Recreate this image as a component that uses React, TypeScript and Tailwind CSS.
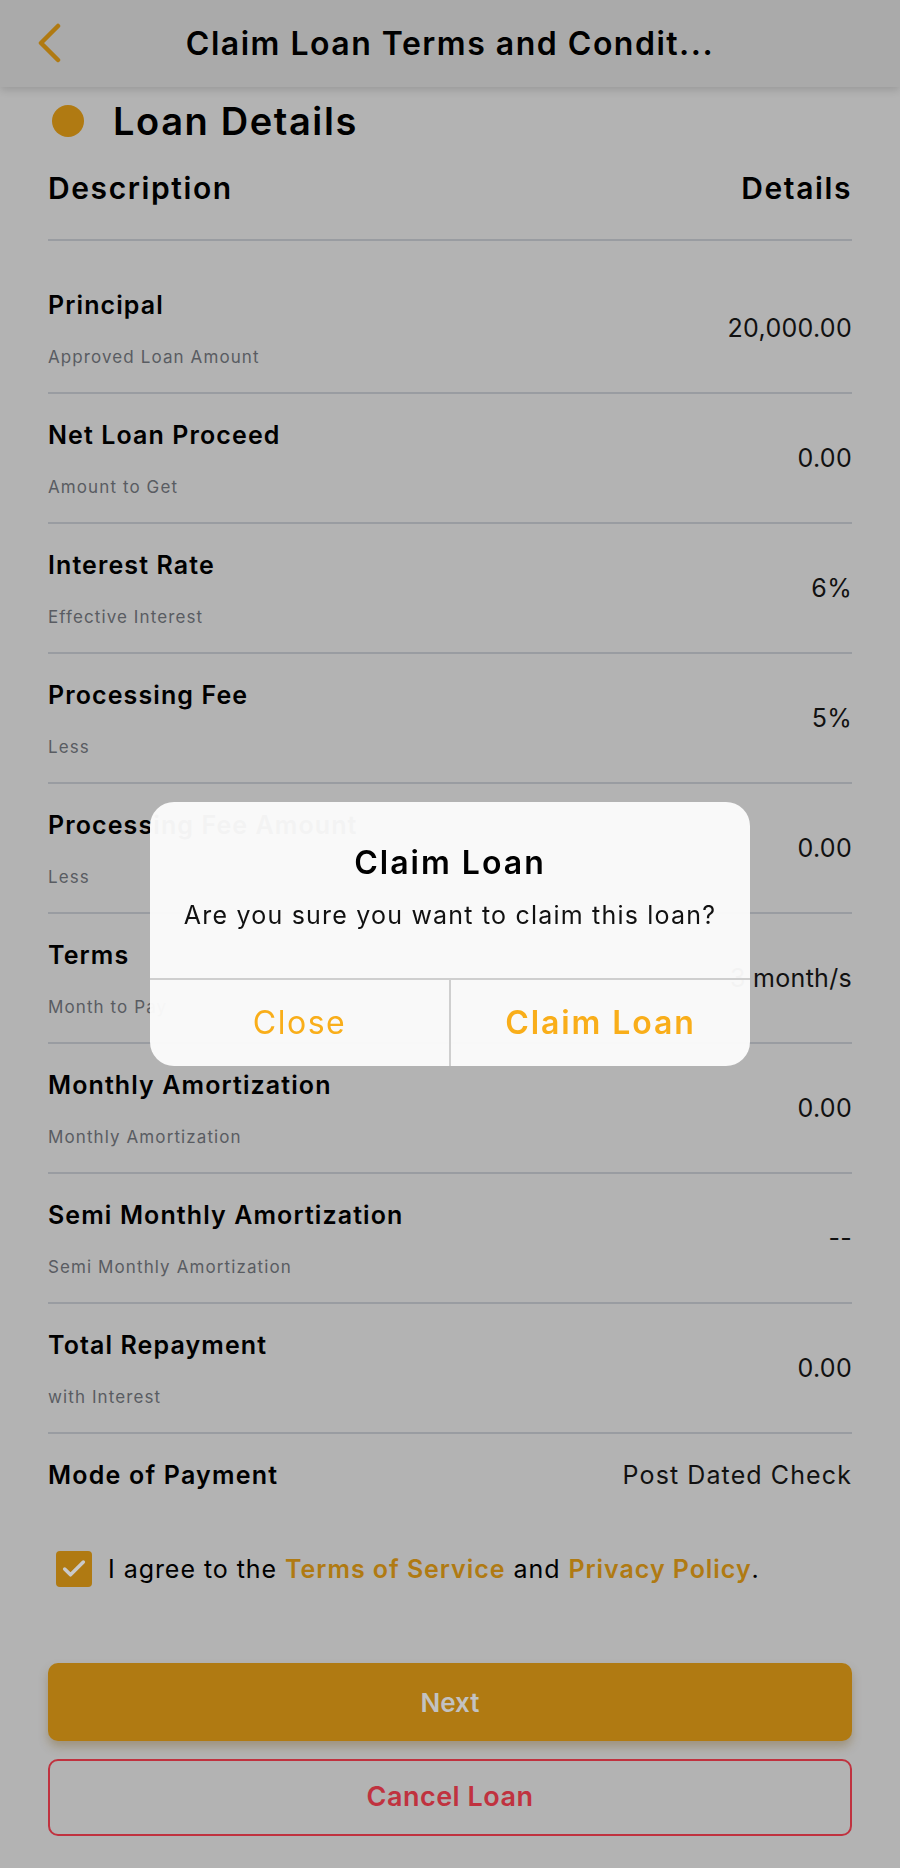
import { Check } from 'lucide-react';

interface DetailRow {
  title: string;
  subtitle: string;
  value: string;
}

const rows: DetailRow[] = [
  { title: 'Principal', subtitle: 'Approved Loan Amount', value: '20,000.00' },
  { title: 'Net Loan Proceed', subtitle: 'Amount to Get', value: '0.00' },
  { title: 'Interest Rate', subtitle: 'Effective Interest', value: '6%' },
  { title: 'Processing Fee', subtitle: 'Less', value: '5%' },
  { title: 'Processing Fee Amount', subtitle: 'Less', value: '0.00' },
  { title: 'Terms', subtitle: 'Month to Pay', value: '3 month/s' },
  { title: 'Monthly Amortization', subtitle: 'Monthly Amortization', value: '0.00' },
  { title: 'Semi Monthly Amortization', subtitle: 'Semi Monthly Amortization', value: '--' },
  { title: 'Total Repayment', subtitle: 'with Interest', value: '0.00' },
];

export default function App() {
  return (
    <div
      className="relative min-h-[1868px] w-full bg-[#b3b3b3] text-black"
      style={{ fontFamily: 'Inter, "Noto Sans", sans-serif' }}
    >
      {/* Header */}
      <div className="relative z-10 grid h-[87px] grid-cols-[1fr_auto_1fr] items-center bg-[#aaaaaa] shadow-[0_3px_8px_rgba(0,0,0,0.14)]">
        <div className="pl-[36px]">
          <svg width="28" height="42" viewBox="0 0 28 42" fill="none">
            <polyline
              points="22,3 5,20 22,37"
              stroke="#b07a12"
              strokeWidth="4.5"
              strokeLinecap="round"
              strokeLinejoin="round"
            />
          </svg>
        </div>
        <h1 className="text-[32px] font-semibold leading-[38px] tracking-[1.5px]">
          Claim Loan Terms and Condit...
        </h1>
        <div />
      </div>

      <div className="px-[48px]">
        {/* Section title */}
        <div className="mt-[11px] flex h-[46px] items-center">
          <span className="ml-[4px] h-[32px] w-[32px] rounded-full bg-[#b07a12]" />
          <h2 className="ml-[29px] text-[38px] font-semibold leading-[46px] tracking-[1.6px]">
            Loan Details
          </h2>
        </div>

        {/* Column header */}
        <div className="mt-[26px] flex justify-between border-b-2 border-[#999ca1] pb-[32px]">
          <span className="text-[30px] font-semibold leading-[37px] tracking-[1.6px]">Description</span>
          <span className="text-[30px] font-semibold leading-[37px] tracking-[1.6px]">Details</span>
        </div>

        {/* Rows */}
        <div className="mt-[23px]">
          {rows.map((row) => (
            <div
              key={row.title}
              className="flex h-[130px] justify-between border-b-2 border-[#999ca1]"
            >
              <div className="pt-[25px]">
                <p className="text-[25px] font-semibold leading-[32px] tracking-[1.1px]">{row.title}</p>
                <p className="mt-[25px] text-[17px] leading-[22px] tracking-[1.1px] text-[#595c62]">
                  {row.subtitle}
                </p>
              </div>
              <span className="self-center text-[25px] leading-[32px] tracking-[0.3px] text-[#111]">
                {row.value}
              </span>
            </div>
          ))}
        </div>

        {/* Mode of payment */}
        <div className="flex items-center justify-between pt-[25px]">
          <span className="text-[25px] font-semibold leading-[32px] tracking-[1.2px]">Mode of Payment</span>
          <span className="text-[25px] leading-[32px] tracking-[1.1px] text-[#111]">Post Dated Check</span>
        </div>

        {/* Agreement */}
        <div className="mt-[60px] flex items-center pl-[8px]">
          <span className="flex h-[36px] w-[36px] items-center justify-center rounded-[4px] bg-[#b07a12]">
            <Check className="h-[28px] w-[28px] text-[#c9c9c9]" strokeWidth={3} />
          </span>
          <p className="ml-[16px] text-[25px] leading-[32px] tracking-[0.95px]">
            I agree to the{' '}
            <span className="font-semibold text-[#b07a12]">Terms of Service</span> and{' '}
            <span className="font-semibold text-[#b07a12]">Privacy Policy</span>.
          </p>
        </div>

        {/* Actions */}
        <button className="mt-[76px] flex h-[78px] w-full items-center justify-center rounded-[10px] bg-[#b07a12] text-[26px] font-semibold text-[#c2c2c2] shadow-[0_6px_10px_rgba(120,90,30,0.35)]">
          Next
        </button>
        <button className="mt-[18px] flex h-[77px] w-full items-center justify-center rounded-[10px] border-2 border-[#c0323f] text-[27px] font-semibold tracking-[0.5px] text-[#c0323f]">
          Cancel Loan
        </button>
      </div>

      {/* Confirm dialog */}
      <div className="fixed inset-0 z-20 flex items-center justify-center">
        <div className="flex h-[264px] w-[600px] flex-col overflow-hidden rounded-[24px] bg-[#fbfbfb]/[0.97]">
          <div className="flex h-[176px] flex-col items-center pt-[42px]">
            <h3 className="text-[32px] font-semibold leading-[38px] tracking-[2px]">Claim Loan</h3>
            <p className="mt-[17px] text-[25px] leading-[32px] tracking-[1.2px] text-[#111]">
              Are you sure you want to claim this loan?
            </p>
          </div>
          <div className="flex flex-1 border-t-2 border-[#cfcfcf]">
            <button className="flex flex-1 items-center justify-center text-[32px] tracking-[1.5px] text-[#f9ae1a]">
              Close
            </button>
            <div className="w-[2px] bg-[#cfcfcf]" />
            <button className="flex flex-1 items-center justify-center text-[32px] font-semibold tracking-[1.9px] text-[#f9ae1a]">
              Claim Loan
            </button>
          </div>
        </div>
      </div>
    </div>
  );
}
